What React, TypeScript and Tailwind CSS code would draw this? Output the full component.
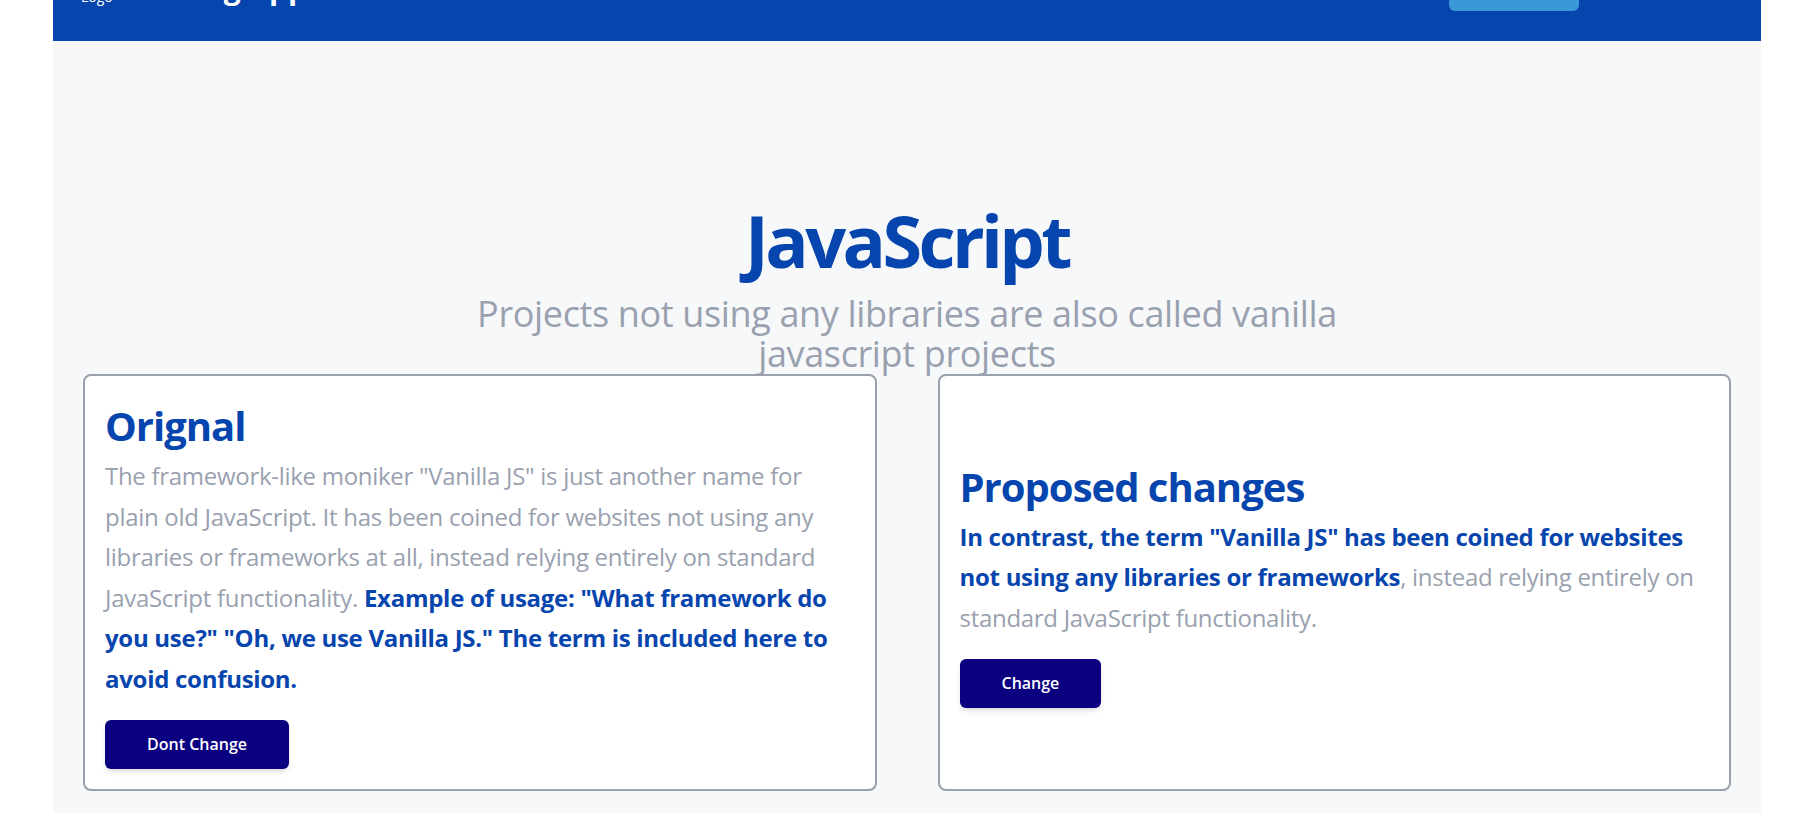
import React from "react";

function Card({ title, children, button }: { title: string; children: React.ReactNode; button: string }) {
    return (
        <div className="flex flex-col justify-center rounded-lg border-2 border-gray-400 bg-white p-5">
            <h2 className="text-[40px] font-bold leading-[60px] tracking-tight text-[#0645ad]">{title}</h2>
            <p className="text-2xl leading-[40.6px] tracking-[-0.012em] text-gray-400">{children}</p>
            <div>
                <button className="mt-5 h-[49px] rounded-md bg-[#0a0080] px-[42px] text-base font-semibold text-white shadow-md">
                    {button}
                </button>
            </div>
        </div>
    );
}

export default function App() {
    return (
        <div className="min-h-screen bg-white font-['Open_Sans',sans-serif]">
            <div className="ml-[53px] min-h-[813px] w-[1708px] bg-[#f7f8fa]">
                {/* header, page is scrolled so only the bottom shows */}
                <header className="flex h-[41px] items-end overflow-hidden bg-[#0645ad] px-[28px]">
                    <span className="mb-[37px] text-sm leading-[14px] text-white">Logo</span>
                    <span className="mb-[38px] ml-[63px] text-[30px] font-bold leading-[30px] text-white">Blog App</span>
                    <button className="mb-[30px] ml-auto mr-[154px] h-[44px] w-[130px] rounded-md bg-[#3a98d8] pb-4 text-white">
                        Create
                    </button>
                </header>

                <main className="flex flex-col items-center pt-[163px] pb-[21px]">
                    <h1 className="text-7xl font-bold leading-none tracking-[-0.05em] text-[#0645ad]">JavaScript</h1>
                    <p className="mt-[18px] max-w-[900px] text-center text-4xl tracking-[-0.01em] text-gray-400">
                        Projects not using any libraries are also called vanilla javascript projects
                    </p>

                    <div className="grid w-full grid-cols-2 gap-[61px] px-[30px]">
                        <Card title="Orignal" button="Dont Change">
                            The framework-like moniker "Vanilla JS" is just another name for plain old JavaScript. It has
                            been coined for websites not using any libraries or frameworks at all, instead relying
                            entirely on standard JavaScript functionality.{" "}
                            <span className="font-bold text-[#0645ad]">
                                Example of usage: "What framework do you use?" "Oh, we use Vanilla JS." The term is
                                included here to avoid confusion.
                            </span>
                        </Card>
                        <Card title="Proposed changes" button="Change">
                            <span className="font-bold text-[#0645ad]">
                                In contrast, the term "Vanilla JS" has been coined for websites not using any libraries
                                or frameworks
                            </span>
                            , instead relying entirely on standard JavaScript functionality.
                        </Card>
                    </div>
                </main>
            </div>
        </div>
    );
}
